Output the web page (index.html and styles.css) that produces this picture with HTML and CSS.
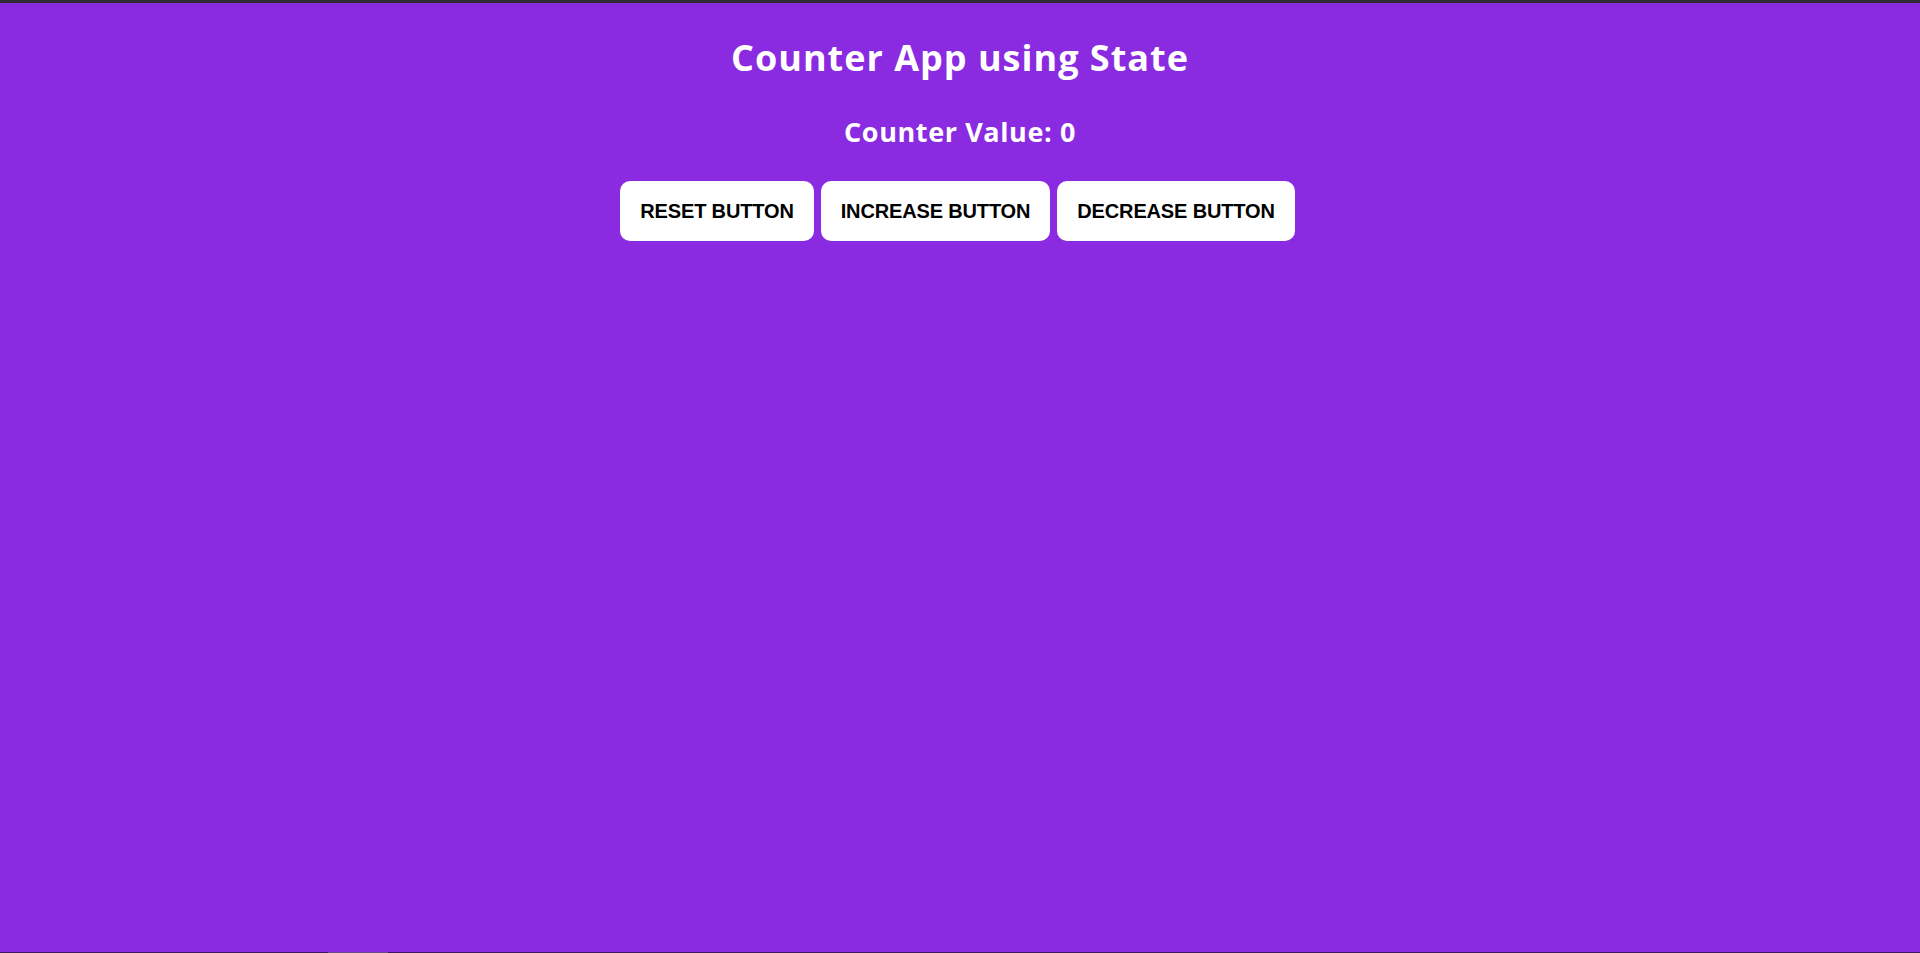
FILE: index.html
```html
<!DOCTYPE html>
<html lang="en">
<head>
<meta charset="utf-8">
<title>Counter App using State</title>
<link rel="stylesheet" href="styles.css">
</head>
<body>
  <div class="top-edge"></div>
  <main class="app">
    <h1 class="title">Counter App using State</h1>
    <h2 class="value">Counter Value: 0</h2>
    <div class="actions">
      <button class="btn" type="button">RESET BUTTON</button>
      <button class="btn" type="button">INCREASE BUTTON</button>
      <button class="btn" type="button">DECREASE BUTTON</button>
    </div>
  </main>
  <div class="bottom-edge"><span class="bottom-thumb"></span></div>
</body>
</html>
```

FILE: styles.css
```css
html, body {
  margin: 0;
  padding: 0;
  height: 100%;
}

body {
  display: flex;
  flex-direction: column;
  background: #8a2be2;
  font-family: "Open Sans", "Noto Sans", sans-serif;
  color: #ffffff;
}

.top-edge {
  height: 3px;
  flex: 0 0 3px;
  background: #2f2b35;
}

.app {
  flex: 1;
  display: flex;
  flex-direction: column;
  align-items: center;
  padding-top: 33px;
}

.title {
  margin: 0;
  font-size: 36px;
  line-height: 44px;
  font-weight: 700;
  letter-spacing: 1px;
}

.value {
  margin: 35px 0 0;
  font-size: 27px;
  line-height: 34px;
  font-weight: 700;
  letter-spacing: 0.6px;
}

.actions {
  display: flex;
  gap: 7px;
  margin-top: 32px;
  margin-right: 5px;
}

.btn {
  height: 60px;
  padding: 0 20px;
  border: none;
  border-radius: 10px;
  background: #ffffff;
  color: #000000;
  font-family: "Liberation Sans", Arial, sans-serif;
  font-size: 20px;
  font-weight: 700;
  letter-spacing: -0.15px;
  cursor: pointer;
}

.bottom-edge {
  flex: 0 0 1px;
  height: 1px;
  display: flex;
  background: #3e165f;
}

.bottom-thumb {
  margin-left: 328px;
  width: 60px;
  background: #6a4a86;
}
```
